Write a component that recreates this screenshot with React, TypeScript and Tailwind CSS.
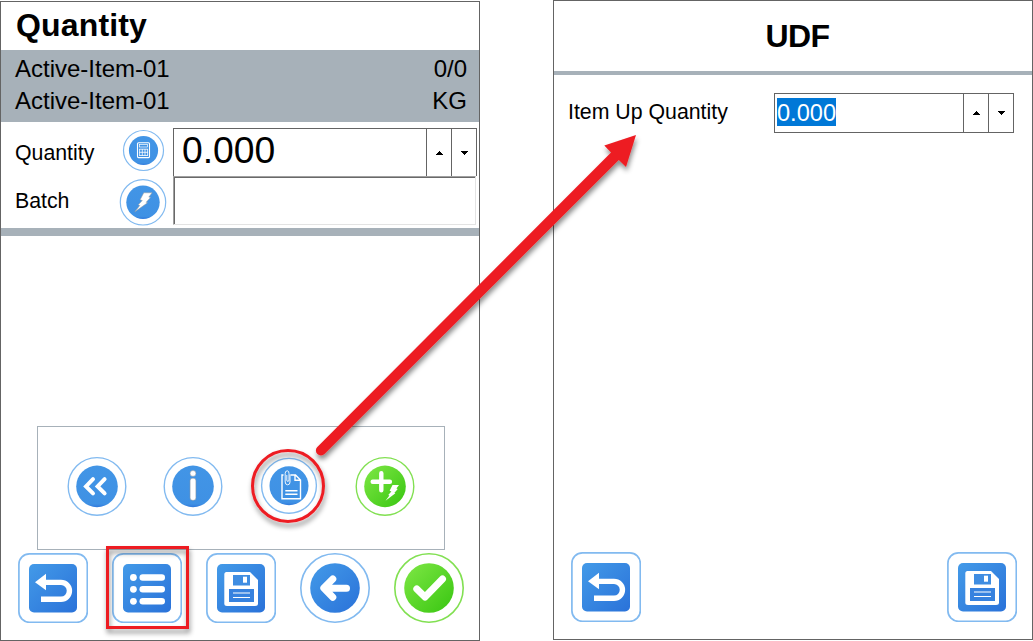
import type { ReactNode } from "react";

const BOLT =
  "M9 0 H17.3 L14 4.3 L15.7 4.7 L11.3 9.5 L12.7 10 L0 19 L5 12.7 L3.5 12 L7.5 7.7 L5.3 7 Z";

function Gradients() {
  return (
    <svg className="absolute h-0 w-0" aria-hidden="true">
      <defs>
        <linearGradient id="blue" x1="0" y1="0" x2="1" y2="1">
          <stop offset="0" stopColor="#439ae8" />
          <stop offset="1" stopColor="#2a72d9" />
        </linearGradient>
        <linearGradient id="soft" x1="0" y1="0" x2="0" y2="1">
          <stop offset="0" stopColor="#4295e6" />
          <stop offset="0.92" stopColor="#3f91e4" />
          <stop offset="1" stopColor="#3079dc" />
        </linearGradient>
        <linearGradient id="green" x1="0" y1="0" x2="1" y2="1">
          <stop offset="0.1" stopColor="#78e440" />
          <stop offset="0.9" stopColor="#3fc916" />
        </linearGradient>
      </defs>
    </svg>
  );
}

function SquareButton({ children }: { children: ReactNode }) {
  return (
    <button className="block size-[70px] shrink-0">
      <svg viewBox="0 0 70 70" className="block size-[70px]" fill="none">
        <rect x="0.9" y="0.9" width="68.4" height="68.4" rx="10.5" fill="#fff" stroke="#82baf0" strokeWidth="1.7" />
        <rect x="11" y="11" width="48" height="48.5" rx="5" fill="url(#blue)" />
        {children}
      </svg>
    </button>
  );
}

function UndoButton() {
  return (
    <SquareButton>
      <path d="M17 29.3 L28 20.8 V26.7 H43 A11 11 0 0 1 43 49 H23 V43.6 H43 A5.7 5.7 0 0 0 43 32.1 H28 V37.2 Z" fill="#fff" />
    </SquareButton>
  );
}

function ListButton() {
  return (
    <SquareButton>
      {[24.5, 36.3, 48.3].map((y) => (
        <g key={y} fill="#fff">
          <circle cx="21.4" cy={y} r="3.4" />
          <rect x="27.5" y={y - 3.2} width="25.5" height="6.4" rx="3.2" />
        </g>
      ))}
    </SquareButton>
  );
}

function SaveButton() {
  return (
    <SquareButton>
      <path d="M20.5 19 H44 L52 27 V50.5 Q52 53 49 53 H21 Q18.3 53 18.3 50.5 V21.7 Q18.3 19 20.5 19 Z" fill="#fff" />
      <rect x="27" y="22" width="17" height="10.5" fill="#3f8de2" />
      <rect x="37" y="23.7" width="4" height="6" fill="#fff" />
      <rect x="23" y="36" width="25" height="13" fill="#3782df" />
      <path d="M27 40 H44 M27 44.5 H44" stroke="#fff" strokeWidth="1.2" />
    </SquareButton>
  );
}

function RoundButton({ green, children }: { green?: boolean; children: ReactNode }) {
  return (
    <button className="block size-[70px] shrink-0">
      <svg viewBox="0 0 70 70" className="block size-[70px]" fill="none">
        <circle cx="35" cy="35" r="34.2" fill="#fff" stroke={green ? "#82e052" : "#82baf0"} strokeWidth="1.6" />
        <circle cx="35" cy="35" r="24.8" fill={green ? "url(#green)" : "url(#blue)"} />
        {children}
      </svg>
    </button>
  );
}

function MiniButton({ green, small, children }: { green?: boolean; small?: boolean; children: ReactNode }) {
  return (
    <button className="block size-[60px] shrink-0">
      <svg viewBox="0 0 60 60" className="block size-[60px]" fill="none">
        <circle
          cx="30"
          cy={small ? 29.8 : 30.4}
          r={small ? 27.4 : 28.8}
          stroke={green ? "#82e052" : "#82baf0"}
          strokeWidth="1.4"
        />
        <circle cx="30" cy={small ? 29.8 : 30.4} r={small ? 19.5 : 20.8} fill={green ? "url(#green)" : "url(#soft)"} />
        {children}
      </svg>
    </button>
  );
}

function Spinner({ children, className }: { children: ReactNode; className: string }) {
  return (
    <div className={`flex border border-[#646464] bg-white ${className}`}>
      <div className="flex-1">{children}</div>
      <button className="flex w-[25px] items-center justify-center border-l border-[#646464]">
        <svg width="7" height="4" viewBox="0 0 7 4" shapeRendering="crispEdges">
          <path d="M3 0h1v1h1v1h1v1h1v1H0V3h1V2h1V1h1z" />
        </svg>
      </button>
      <button className="flex w-[25px] items-center justify-center border-l border-[#646464]">
        <svg width="7" height="4" viewBox="0 0 7 4" shapeRendering="crispEdges">
          <path d="M0 0h7v1H6v1H5v1H4v1H3V3H2V2H1V1H0z" />
        </svg>
      </button>
    </div>
  );
}

function QuantityPanel() {
  return (
    <section className="mt-px flex h-[640px] w-[480px] flex-col border border-[#646464] bg-white">
      <h1 className="h-12 pl-[15px] text-[32px] leading-[46px] font-bold tracking-[0.15px]">Quantity</h1>
      <div className="h-[72px] bg-[#a7b1b9] pt-[3px] pr-[12px] pl-[14px] text-[24px] leading-8">
        <div className="flex justify-between">
          <span>Active-Item-01</span>
          <span>0/0</span>
        </div>
        <div className="flex justify-between">
          <span>Active-Item-01</span>
          <span>KG</span>
        </div>
      </div>
      <div className="flex h-[106px] pt-[6px] pr-[2px] pl-[14px] text-[21.3px]">
        <div className="w-[104px]">
          <div className="h-12 leading-[50px]">Quantity</div>
          <div className="h-12 leading-[50px]">Batch</div>
        </div>
        <div className="w-[54px]">
          <svg viewBox="0 0 50 100" className="block h-[100px] w-[50px]" fill="none">
            <circle cx="24.5" cy="22.5" r="20" stroke="#82baf0" strokeWidth="1.2" />
            <circle cx="24.5" cy="22.5" r="14.6" fill="url(#soft)" />
            <rect x="18.5" y="14.8" width="12" height="14.8" rx="1" stroke="#fff" strokeWidth="1.1" />
            <rect x="20.5" y="16.5" width="8" height="2.5" stroke="#fff" strokeWidth="0.7" />
            <path
              d="M20.2 21.2H28.9M20.2 24.3H28.9M20.2 27.5H28.9M20.6 21V27.8M23.3 21V27.8M26 21V27.8M28.6 21V27.8"
              stroke="#fff"
              strokeWidth="0.8"
            />
            <circle cx="24" cy="74.3" r="22.7" stroke="#82baf0" strokeWidth="1.2" />
            <circle cx="24" cy="74.3" r="16.7" fill="url(#soft)" />
            <path d={BOLT} transform="translate(15.8 64.8)" fill="#fff" stroke="#9a9a9a" strokeWidth="0.5" />
          </svg>
        </div>
        <div className="flex-1">
          <Spinner className="h-12 w-[304px] border-b-0">
            <div className="pl-[8px] text-[37.3px] leading-[42px]">0.000</div>
          </Spinner>
          <div className="h-[49px] w-[303px] border border-t-[#a0a0a0] border-r-[#e3e3e3] border-b-[#e3e3e3] border-l-[#a0a0a0]">
            <div className="h-full border-t border-l border-[#696969]" />
          </div>
        </div>
      </div>
      <div className="h-2 bg-[#a7b1b9]" />
      <div className="mt-[190px] ml-9 flex h-[124px] w-[408px] items-start gap-9 border border-[#a7b1b9] pt-[29px] pl-[29px]">
        <MiniButton>
          <path
            d="M26 23.2 L19 30.4 L26 37.4 M37.6 23.2 L30.6 30.4 L37.6 37.4"
            stroke="#fff"
            strokeWidth="4"
            strokeLinecap="round"
          />
        </MiniButton>
        <MiniButton>
          <circle cx="30" cy="17.4" r="2.9" fill="#fff" stroke="#999" strokeWidth="0.5" />
          <rect x="27.1" y="22.3" width="5.8" height="22" rx="2.4" fill="#fff" stroke="#999" strokeWidth="0.5" />
        </MiniButton>
        <MiniButton small>
          <path d="M31.5 19 H36.5 L41.5 24 V42.8 H23 V19 H24.5 M36 19 V24.3 H41.5" stroke="#fff" strokeWidth="1.4" />
          <path d="M26.3 34.8 H38.5 M26.3 38.2 H38.5" stroke="#fff" strokeWidth="1.5" />
          <path
            d="M31 18.5 V26 Q31 28.8 28.7 28.8 Q26.2 28.8 26.2 26 V17.5 Q26.2 14.8 28.3 14.8 Q30 14.8 30 17.5 V24 Q30 25.4 28.8 25.4 Q27.8 25.4 27.8 24 V19"
            stroke="#fff"
            strokeWidth="0.9"
          />
        </MiniButton>
        <MiniButton green>
          <path d="M26.3 17.2 V34.3 M17.7 25.8 H34.9" stroke="#fff" strokeWidth="4.4" strokeLinecap="round" />
          <path d={BOLT} transform="translate(30.5 29) scale(.78 .83)" fill="#fff" />
        </MiniButton>
      </div>
      <div className="mt-[3px] ml-[17px] flex gap-6">
        <UndoButton />
        <ListButton />
        <SaveButton />
        <RoundButton>
          <path
            d="M32.8 26 L23.8 35 L32.8 44.3 M24.5 35.2 H46.5"
            stroke="#fff"
            strokeWidth="7"
            strokeLinecap="round"
            strokeLinejoin="round"
          />
        </RoundButton>
        <RoundButton green>
          <path d="M22.8 36 L31 44 L48.5 26" stroke="#fff" strokeWidth="7" strokeLinecap="round" strokeLinejoin="round" />
        </RoundButton>
      </div>
    </section>
  );
}

function UdfPanel() {
  return (
    <section className="flex h-[640px] w-[480px] flex-col border border-[#646464] bg-white">
      <h1 className="h-[70px] pl-[9px] text-center text-[32px] leading-[70px] font-bold tracking-[-0.6px]">UDF</h1>
      <div className="h-1 bg-[#a7b1b9]" />
      <div className="flex justify-between pt-[18px] pr-[18px] pl-[14px]">
        <span className="text-[21.3px] leading-[38px]">Item Up Quantity</span>
        <Spinner className="h-10 w-[240px]">
          <span className="mt-[4px] ml-[2px] block h-7 w-[59px] bg-[#0078d7] text-[23.6px] leading-[30px] text-white">
            0.000
          </span>
        </Spinner>
      </div>
      <div className="mt-auto flex justify-between pr-[15px] pb-[17px] pl-[17px]">
        <UndoButton />
        <SaveButton />
      </div>
    </section>
  );
}

function Annotations() {
  return (
    <svg className="pointer-events-none absolute inset-0" width="1033" height="641" viewBox="0 0 1033 641" fill="none">
      <defs>
        <filter id="shadow" x="-20%" y="-20%" width="140%" height="140%">
          <feDropShadow dx="1" dy="4" stdDeviation="2.5" floodColor="#000" floodOpacity="0.45" />
        </filter>
      </defs>
      <g filter="url(#shadow)">
        <path d="M636 135 L626 167 L618.8 160 L324.5 454 A5 5 0 0 1 317.3 447 L611 152.5 L604.3 145.5 Z" fill="#ed1c24" />
        <circle cx="288" cy="486" r="35.5" stroke="#ed1c24" strokeWidth="3" />
        <rect x="107.5" y="547.5" width="80" height="80" stroke="#ed1c24" strokeWidth="3" />
      </g>
    </svg>
  );
}

export default function App() {
  return (
    <main className="relative flex h-[641px] w-[1033px] justify-between overflow-hidden bg-white font-['Liberation_Sans',Arial,sans-serif] text-black">
      <Gradients />
      <QuantityPanel />
      <UdfPanel />
      <Annotations />
    </main>
  );
}
